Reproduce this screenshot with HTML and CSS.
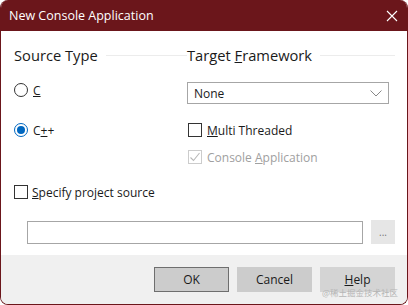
FILE: index.html
```html
<!DOCTYPE html>
<html lang="en">
<head>
    <meta charset="UTF-8">
    <title>New Console Application</title>
    <link rel="stylesheet" href="styles.css">
</head>
<body>
    <div class="dialog">
        <div class="titlebar">
            <span class="title">New Console Application</span>
            <svg class="close-icon" width="12" height="12" viewBox="0 0 12 12">
                <path d="M1 1 L11 11 M11 1 L1 11" stroke="#fff" stroke-width="1.1" fill="none"/>
            </svg>
        </div>

        <div class="dialog-body">
            <div class="columns">
                <div class="col">
                    <div class="group-title">
                        <span>Source Type</span>
                        <span class="rule"></span>
                    </div>
                    <div class="option-row first">
                        <span class="radio"></span>
                        <span class="label"><u>C</u></span>
                    </div>
                    <div class="option-row second">
                        <span class="radio checked"></span>
                        <span class="label">C<u>+</u>+</span>
                    </div>
                </div>

                <div class="col">
                    <div class="group-title">
                        <span>Target <u>F</u>ramework</span>
                        <span class="rule"></span>
                    </div>
                    <div class="combo">
                        <span>None</span>
                        <svg width="12" height="7" viewBox="0 0 12 7">
                            <path d="M0.5 0.5 L6 6 L11.5 0.5" stroke="#888" stroke-width="1" fill="none"/>
                        </svg>
                    </div>
                    <div class="option-row multi">
                        <span class="checkbox"></span>
                        <span class="label"><u>M</u>ulti Threaded</span>
                    </div>
                    <div class="option-row console disabled">
                        <span class="checkbox checked">
                            <svg width="12" height="12" viewBox="0 0 12 12">
                                <path d="M1.5 6.5 L4.5 9.5 L10.5 2" stroke="#b8b8b8" stroke-width="1.1" fill="none"/>
                            </svg>
                        </span>
                        <span class="label">Console <u>A</u>pplication</span>
                    </div>
                </div>
            </div>

            <div class="option-row specify">
                <span class="checkbox"></span>
                <span class="label"><u>S</u>pecify project source</span>
            </div>

            <div class="source-row">
                <div class="textbox"></div>
                <div class="browse">...</div>
            </div>
        </div>

        <div class="footer">
            <button class="btn btn-default">OK</button>
            <button class="btn">Cancel</button>
            <button class="btn btn-help"><u>H</u>elp</button>
            <span class="watermark">@稀土掘金技术社区</span>
        </div>
    </div>
</body>
</html>
```

FILE: styles.css
```css
* {
    margin: 0;
    padding: 0;
    box-sizing: border-box;
}

body {
    font-family: "Open Sans", "Noto Sans", sans-serif;
    background: #ffffff;
    width: 408px;
    height: 305px;
    overflow: hidden;
}

.dialog {
    width: 408px;
    height: 305px;
    border: 1px solid #6b161b;
    border-top: none;
    border-radius: 8px;
    overflow: hidden;
    display: flex;
    flex-direction: column;
    background: #ffffff;
}

.titlebar {
    height: 31px;
    background: #6b161b;
    display: flex;
    align-items: center;
    justify-content: space-between;
    padding: 0 9px 0 8px;
    flex-shrink: 0;
}

.title {
    color: #ffffff;
    font-size: 12.5px;
}

.close-icon {
    margin-top: 1px;
}

.dialog-body {
    flex: 1;
    padding: 14px 12px 0 12px;
}

.columns {
    display: grid;
    grid-template-columns: 174px 1fr;
    height: 133px;
}

.group-title {
    display: flex;
    align-items: center;
    font-size: 14.7px;
    color: #1a1a1a;
    height: 20px;
}

.col:first-child .group-title {
    padding-left: 1px;
}

.group-title .rule {
    flex: 1;
    height: 1px;
    background: #ececec;
    margin-left: 8px;
}

.option-row {
    display: flex;
    align-items: center;
    height: 14px;
    font-size: 12px;
    color: #1a1a1a;
}

.option-row .label {
    margin-left: 5px;
}

.option-row.first {
    margin-top: 18px;
}

.option-row.second {
    margin-top: 26px;
}

.radio {
    width: 14px;
    height: 14px;
    border: 1px solid #333;
    border-radius: 50%;
    display: inline-flex;
    align-items: center;
    justify-content: center;
    margin-left: 1px;
}

.radio.checked {
    border-color: #0067c0;
}

.radio.checked::after {
    content: "";
    width: 8px;
    height: 8px;
    border-radius: 50%;
    background: #0067c0;
}

.combo {
    margin-top: 17px;
    width: 202px;
    height: 22px;
    border: 1px solid #a6a6a6;
    display: flex;
    align-items: center;
    justify-content: space-between;
    padding: 0 6px 0 6px;
    font-size: 12px;
    color: #1a1a1a;
}

.checkbox {
    width: 14px;
    height: 14px;
    border: 1px solid #333;
    display: inline-flex;
    align-items: center;
    justify-content: center;
    margin-left: 1px;
}

.option-row.multi {
    margin-top: 19px;
}

.option-row.console {
    margin-top: 13px;
}

.disabled {
    color: #a0a0a0;
}

.disabled .checkbox {
    border-color: #cccccc;
}

.option-row.specify {
    margin-top: 7px;
}

.specify .label {
    margin-left: 4px;
}

.source-row {
    display: flex;
    align-items: center;
    gap: 8px;
    margin-top: 21px;
    padding-left: 14px;
}

.textbox {
    width: 337px;
    height: 23px;
    border: 1px solid #a6a6a6;
}

.browse {
    width: 24px;
    height: 24px;
    background: #e6e6e6;
    font-size: 10px;
    color: #777;
    display: flex;
    align-items: center;
    justify-content: center;
}

.footer {
    height: 49px;
    background: #f0f0f0;
    display: flex;
    justify-content: flex-end;
    align-items: flex-start;
    gap: 8px;
    padding: 12px 12px 0 0;
    position: relative;
    flex-shrink: 0;
}

.btn {
    width: 75px;
    height: 25px;
    border: none;
    background: #cccccc;
    font-family: "Open Sans", "Noto Sans", sans-serif;
    font-size: 12px;
    color: #1a1a1a;
}

.btn-default {
    border: 1px solid #6e6e6e;
}

.btn-help {
    background: #d4d4d4;
}

.watermark {
    position: absolute;
    right: 9px;
    bottom: 8px;
    font-size: 8.5px;
    line-height: 1;
    color: #b5b5b5;
    font-family: "Noto Sans CJK SC", sans-serif;
}
```
